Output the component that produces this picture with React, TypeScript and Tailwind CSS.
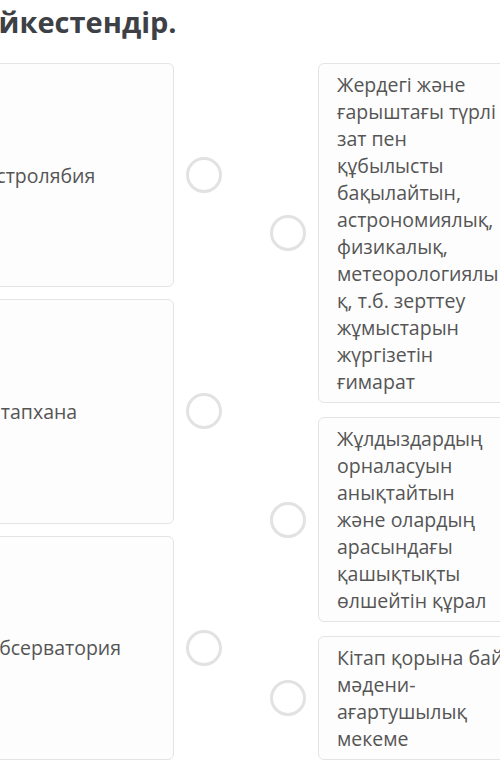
import React from "react";

const left = ["Астролябия", "Кітапхана", "Обсерватория"];

// each definition card keeps its own width, the last one is wider
const right = [
  {
    text: "Жердегі және ғарыштағы түрлі зат пен құбылысты бақылайтын, астрономиялық, физикалық, метеорологиялық, т.б. зерттеу жұмыстарын жүргізетін ғимарат",
    w: "w-[204px]",
  },
  {
    text: "Жұлдыздардың орналасуын анықтайтын және олардың арасындағы қашықтықты өлшейтін құрал",
    w: "w-[204px]",
  },
  { text: "Кітап қорына бай мәдени-ағартушылық мекеме", w: "w-[230px]" },
];

function Dot() {
  return <span className="block w-9 h-9 shrink-0 rounded-full border-[3px] border-[#e2e2e2] bg-white" />;
}

function App(): JSX.Element {
  return (
    <div className="min-h-screen w-[500px] overflow-hidden bg-white font-['Open_Sans',sans-serif] text-[#555]">
      <h1 className="ml-[-37px] pt-[7px] text-[29px] leading-none font-bold text-[#3d4146] whitespace-nowrap">
        Сәйкестендір.
      </h1>

      <div className="flex ml-[-33px] mt-[27px] w-[580px] gap-12">
        {/* terms */}
        <div className="flex flex-col gap-3">
          {left.map((t) => (
            <div key={t} className="flex-1 flex items-center gap-3">
              <div className="self-stretch w-[207px] flex items-center pl-[16px] pr-5 rounded-md border border-[#e4e4e4] bg-[#fdfdfd] text-[19.5px]">
                {t}
              </div>
              <Dot />
            </div>
          ))}
        </div>

        {/* definitions */}
        <div className="flex flex-col gap-[14px]">
          {right.map((r) => (
            <div key={r.text} className="flex items-center gap-3">
              <Dot />
              <div
                className={`${r.w} pl-[18px] pr-5 py-[7px] rounded-md border border-[#e4e4e4] bg-[#fdfdfd] text-[19.5px] leading-[27px] break-words`}
              >
                {r.text}
              </div>
            </div>
          ))}
        </div>
      </div>
    </div>
  );
}

export default App;
